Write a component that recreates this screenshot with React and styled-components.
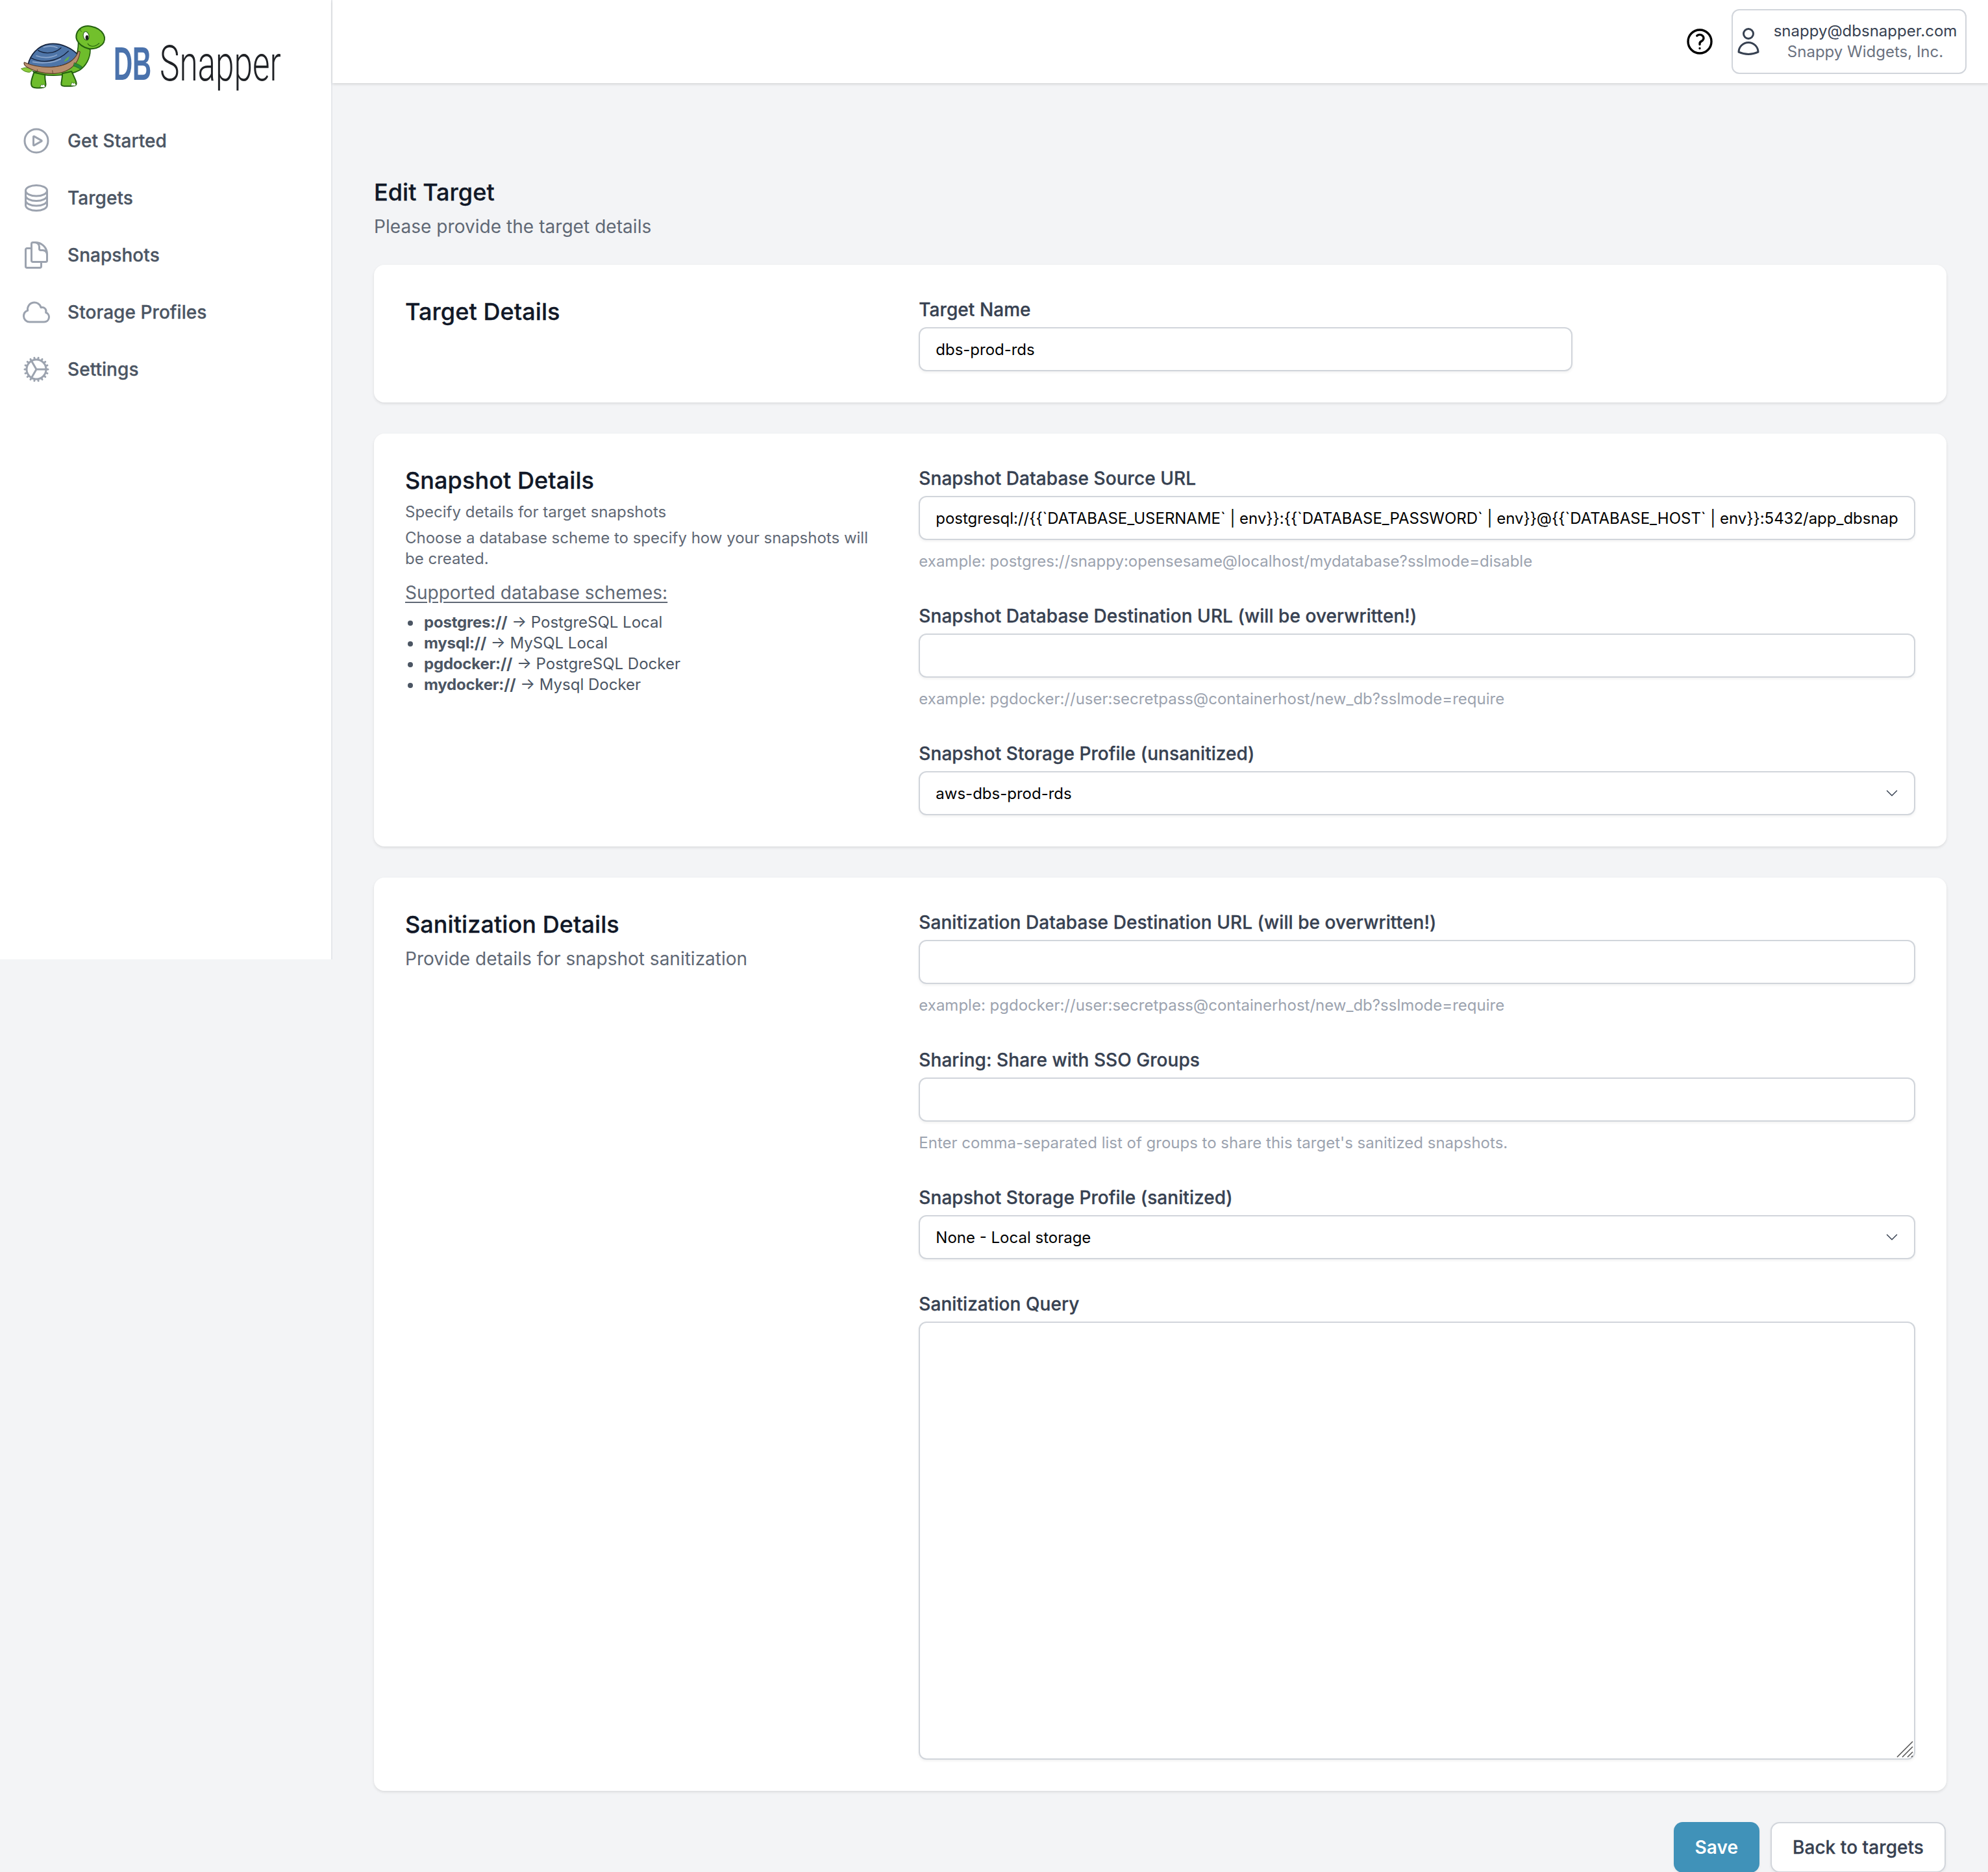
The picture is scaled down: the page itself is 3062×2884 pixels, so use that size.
import React from "react";
import styled, { createGlobalStyle } from "styled-components";

const Global = createGlobalStyle`
  html, body { margin: 0; padding: 0; background: #f3f4f6; }
  body { font-family: Inter, "Liberation Sans", sans-serif; color: #111827; }
  * { box-sizing: border-box; }
`;

const Page = styled.div`
  display: flex;
  align-items: flex-start;
  width: 3062px;
  height: 2884px;
  overflow: hidden;
  background: #f3f4f6;
`;
const Sidebar = styled.aside`
  flex: 0 0 512px;
  height: 1478px;
  background: #fff;
  border-right: 2px solid #e5e7eb;
`;
const LogoSvg = styled.svg`
  display: block;
  width: 450px;
  height: 140px;
  margin-bottom: 33px;
  overflow: visible;
`;
const Nav = styled.nav`
  display: flex;
  flex-direction: column;
  padding-left: 32px;
`;
const NavItem = styled.a`
  display: flex;
  align-items: center;
  gap: 24px;
  height: 88px;
  font-size: 28px;
  font-weight: 500;
  letter-spacing: 0.05px;
  -webkit-text-stroke: 0.3px #4b5563;
  color: #4b5563;
  svg { width: 48px; height: 48px; flex: none; color: #9ca3af; }
`;
const Column = styled.div`
  flex: 1;
  min-width: 0;
`;
const Header = styled.header`
  height: 128px;
  background: #fff;
  box-shadow: 0 2px 4px rgba(0, 0, 0, 0.12);
  display: flex;
  align-items: center;
  justify-content: flex-end;
  padding-right: 33px;
  gap: 25px;
`;
const HelpIcon = styled.svg`
  width: 48px;
  height: 48px;
  color: #000;
  margin-top: -1px;
`;
const UserBox = styled.div`
  width: 362px;
  height: 100px;
  border: 2px solid #d1d5db;
  border-radius: 12px;
  display: flex;
  align-items: center;
  margin-top: -1px;
  svg { width: 48px; height: 48px; color: #374151; flex: none; }
`;
const UserText = styled.div`
  flex: 1;
  text-align: center;
  font-size: 24px;
  line-height: 32px;
  padding: 1px 0 0 2px;
`;
const UserMail = styled.div`
  color: #374151;
`;
const UserOrg = styled.div`
  color: #6b7280;
`;
const Main = styled.main`
  padding: 140px 64px 0;
`;
const PageTitle = styled.h1`
  margin: 0;
  font-size: 36px;
  line-height: 56px;
  font-weight: 500;
  letter-spacing: 0.05px;
  -webkit-text-stroke: 0.3px #111827;
  color: #111827;
`;
const PageSub = styled.p`
  margin: 0 0 40px;
  padding-top: 5px;
  height: 44px;
  font-size: 28px;
  line-height: 40px;
  color: #5f6875;
  letter-spacing: 0.05px;
`;
const Card = styled.section`
  display: grid;
  grid-template-columns: repeat(3, minmax(0, 1fr));
  gap: 48px;
  padding: 48px;
  background: #fff;
  border-radius: 16px;
  box-shadow: 0 2px 4px rgba(0, 0, 0, 0.1);
  margin-bottom: 48px;
`;
const CardTitle = styled.h2`
  margin: 0;
  font-size: 36px;
  line-height: 48px;
  font-weight: 500;
  letter-spacing: 0.08px;
  -webkit-text-stroke: 0.3px #111827;
  color: #111827;
`;
const Small = styled.p`
  margin: 8px 0 0;
  padding-top: 1px;
  margin-bottom: -1px;
  font-size: 24px;
  line-height: 32px;
  color: #5f6875;
`;
const Lead = styled.p`
  margin: 9px 0 0;
  font-size: 28px;
  line-height: 40px;
  color: #5f6875;
`;
const Schemes = styled.p`
  margin: 17px 0 0;
  font-size: 28px;
  line-height: 40px;
  color: #5f6875;
  text-decoration: underline;
  text-underline-offset: 4px;
`;
const SchemeList = styled.ul`
  margin: 10px 0 0;
  padding: 0 0 0 29px;
  list-style: none;
  font-size: 24px;
  line-height: 32px;
  color: #4b5563;
  strong { font-weight: 650; letter-spacing: -0.2px; }
`;
const SchemeItem = styled.li`
  position: relative;
  &::before {
    content: "";
    position: absolute;
    left: -25px;
    top: 13px;
    width: 8px;
    height: 8px;
    border-radius: 50%;
    background: #4b5563;
  }
`;
const Fields = styled.div`
  grid-column: span 2;
  display: flex;
  flex-direction: column;
  gap: 48px;
`;
const Field = styled.div`
  display: flex;
  flex-direction: column;
  width: ${(p) => p.$width || "100%"};
`;
const Label = styled.label`
  font-size: 28px;
  line-height: 40px;
  padding-top: 1px;
  height: 40px;
  font-weight: 500;
  letter-spacing: 0.06px;
  -webkit-text-stroke: 0.3px #374151;
  color: #374151;
  margin-bottom: 8px;
`;
const Input = styled.input`
  width: 100%;
  height: 68px;
  padding: 0 24px;
  border: 2px solid #d1d5db;
  border-radius: 12px;
  background: #fff;
  box-shadow: 0 2px 4px rgba(0, 0, 0, 0.06);
  font-family: inherit;
  font-size: 24px;
  letter-spacing: -0.02px;
  color: #000;
  outline: none;
`;
const Help = styled.div`
  margin: 17px 0 -1px;
  font-size: 24px;
  line-height: 32px;
  color: #9ca3af;
`;
const SelectWrap = styled.div`
  position: relative;
  svg {
    position: absolute;
    right: 24px;
    top: 22px;
    width: 24px;
    height: 24px;
    color: #374151;
    pointer-events: none;
  }
`;
const Select = styled.select`
  appearance: none;
  width: 100%;
  height: 68px;
  padding: 0 24px;
  border: 2px solid #d1d5db;
  border-radius: 12px;
  background: #fff;
  box-shadow: 0 2px 4px rgba(0, 0, 0, 0.06);
  font-family: inherit;
  font-size: 24px;
  color: #000;
  outline: none;
`;
const AreaWrap = styled.div`
  position: relative;
  height: 675px;
  svg {
    position: absolute;
    right: 3px;
    bottom: 3px;
    width: 26px;
    height: 26px;
  }
`;
const Area = styled.textarea`
  display: block;
  width: 100%;
  height: 100%;
  padding: 20px 24px;
  resize: none;
  border: 2px solid #d1d5db;
  border-radius: 12px;
  background: #fff;
  box-shadow: 0 2px 4px rgba(0, 0, 0, 0.06);
  outline: none;
`;
const Actions = styled.div`
  display: flex;
  justify-content: flex-end;
  gap: 17px;
  padding-right: 1px;
`;
const Button = styled.button`
  height: 78px;
  padding: 0 ${(p) => (p.$primary ? 33 : 32)}px;
  border-radius: 14px;
  font-family: inherit;
  font-size: 28px;
  font-weight: ${(p) => (p.$primary ? 600 : 500)};
  letter-spacing: 0.05px;
  -webkit-text-stroke: ${(p) => (p.$primary ? "0" : "0.3px #374151")};
  border: ${(p) => (p.$primary ? "0" : "2px solid #d1d5db")};
  background: ${(p) => (p.$primary ? "#4092b9" : "#fff")};
  color: ${(p) => (p.$primary ? "#fff" : "#374151")};
  box-shadow: 0 2px 4px rgba(0, 0, 0, 0.06);
`;

const Ico = ({ d }) => (
  <svg viewBox="0 0 24 24" fill="none" stroke="currentColor" strokeWidth="1.5" strokeLinecap="round" strokeLinejoin="round">
    {d.map((p, i) => <path key={i} d={p} />)}
  </svg>
);

const icons = {
  play: ["M21 12a9 9 0 1 1-18 0 9 9 0 0 1 18 0Z", "M15.91 11.672a.375.375 0 0 1 0 .656l-5.603 3.113a.375.375 0 0 1-.557-.328V8.887c0-.286.307-.466.557-.327l5.603 3.112Z"],
  stack: ["M20.25 6.375c0 2.278-3.694 4.125-8.25 4.125S3.75 8.653 3.75 6.375m16.5 0c0-2.278-3.694-4.125-8.25-4.125S3.75 4.097 3.75 6.375m16.5 0v11.25c0 2.278-3.694 4.125-8.25 4.125s-8.25-1.847-8.25-4.125V6.375m16.5 0v3.75m-16.5-3.75v3.75m16.5 0v3.75C20.25 16.153 16.556 18 12 18s-8.25-1.847-8.25-4.125v-3.75m16.5 0c0 2.278-3.694 4.125-8.25 4.125s-8.25-1.847-8.25-4.125"],
  docs: ["M15.75 17.25v3.375c0 .621-.504 1.125-1.125 1.125h-9.75a1.125 1.125 0 0 1-1.125-1.125V7.875c0-.621.504-1.125 1.125-1.125H6.75a9.06 9.06 0 0 1 1.5.124m7.5 10.376h3.375c.621 0 1.125-.504 1.125-1.125V11.25c0-4.46-3.243-8.161-7.5-8.876a9.06 9.06 0 0 0-1.5-.124H9.375c-.621 0-1.125.504-1.125 1.125v3.5m7.5 10.375H9.375a1.125 1.125 0 0 1-1.125-1.125v-9.25m12 6.625v-1.875a3.375 3.375 0 0 0-3.375-3.375h-1.5a1.125 1.125 0 0 1-1.125-1.125v-1.5a3.375 3.375 0 0 0-3.375-3.375H9.75"],
  cloud: ["M2.25 15a4.5 4.5 0 0 0 4.5 4.5H18a3.75 3.75 0 0 0 1.332-7.257 3 3 0 0 0-3.758-3.848 5.25 5.25 0 0 0-10.233 2.33A4.502 4.502 0 0 0 2.25 15Z"],
  cog: ["M4.5 12a7.5 7.5 0 0 0 15 0m-15 0a7.5 7.5 0 1 1 15 0m-15 0H3m16.5 0H21m-1.5 0H12m-8.457 3.077 1.41-.513m14.095-5.13 1.41-.513M5.106 17.785l1.15-.964m11.49-9.642 1.149-.964M7.501 19.795l.75-1.3m7.5-12.99.75-1.3m-6.063 16.658.26-1.477m2.605-14.772.26-1.477m0 17.726-.26-1.477M10.698 4.614l-.26-1.477M16.5 19.794l-.75-1.299M7.5 4.205 12 12m6.894 5.785-1.149-.964M6.256 7.178l-1.15-.964m15.352 8.864-1.41-.513M4.954 9.435l-1.41-.514M12.002 12l-3.75 6.495"],
  user: ["M15.75 6a3.75 3.75 0 1 1-7.5 0 3.75 3.75 0 0 1 7.5 0ZM4.501 20.118a7.5 7.5 0 0 1 14.998 0A17.933 17.933 0 0 1 12 21.75c-2.676 0-5.216-.584-7.499-1.632Z"],
  chevron: ["m19.5 8.25-7.5 7.5-7.5-7.5"],
};

const OUT = "#24600f";
const Logo = () => (
  <LogoSvg viewBox="0 0 450 140">
    <g transform="translate(24 30) scale(.3333)" strokeLinejoin="round" strokeLinecap="round">
      <path d="M27 228c14-8 34-8 56 4l-18 12c-16 0-30-6-38-16Z" fill="#8ccb3a" stroke="#4d8a1f" strokeWidth="3" />
      <path d="M80 240c60 30 170 20 215-5 30-20 50-55 50-95l-55-35c0 30-5 55-15 75-50 50-140 65-195 60Z" fill="#6ebd2c" stroke={OUT} strokeWidth="5" />
      <path d="M85 245c-6 18-14 36-13 52 1 12 5 17 14 18 16 2 34 2 44-1 8-3 11-10 9-20-2-12-4-26-3-38Z" fill="#6ebd2c" stroke={OUT} strokeWidth="6" />
      <path d="M216 250c1 18-4 34-5 46-1 9 4 12 14 12 18 1 38 1 50-3 7-3 7-10 4-19-5-14-13-30-20-46Z" fill="#6ebd2c" stroke={OUT} strokeWidth="6" />
      <path d="M113 313l7-14 5 5 5-5 8 11-6 4ZM255 305l6-15 6 6 5-4 7 10-3 4Z" fill="#fff" stroke={OUT} strokeWidth="2" />
      <path d="M58 208c8-40 42-88 100-95 54-6 104 22 130 50-10 22-42 44-90 54-48 10-96 6-128-2-6-1-10-3-12-7Z" fill="#4e75a8" stroke="#14213a" strokeWidth="5" />
      <path d="M104 143c30 18 76 16 106-12" fill="none" stroke="#14213a" strokeWidth="4" />
      <path d="M72 178c50 26 120 20 172-32" fill="none" stroke="#14213a" strokeWidth="4" />
      <path d="M130 128c20-6 44-6 62 2M96 168c30 10 66 10 94-4M80 196c40 8 90 6 128-14" fill="none" stroke="#9db4d4" strokeWidth="5" opacity=".8" />
      <path d="M224 195c4-10 14-20 26-25l-6 14c-6 6-12 10-20 11Z" fill="#5fb04b" />
      <path d="M40 198c-3 8 2 15 12 22 30 18 80 32 128 30 50-3 88-26 106-60 6-12 10-26 12-40l-8-4c-4 14-14 30-28 42-20 18-58 30-98 32-46 2-86-6-124-22Z" fill="#b98f6e" stroke="#5b3d28" strokeWidth="3.5" />
      <path d="M100 232l3 11M170 236l2 12" stroke="#5b3d28" strokeWidth="2.5" fill="none" />
      <path d="M272 200c12 4 24 10 35 18l-6 12c-12-6-22-12-33-15Z" fill="#2c8a3c" stroke={OUT} strokeWidth="2" />
      <path d="M298 42c14-10 34-14 52-10 24 5 46 18 56 36 8 15 7 34-6 48-14 14-38 24-64 18-22-5-42-18-52-38-8-16-4-38 14-54Z" fill="#72c02c" stroke={OUT} strokeWidth="6" />
      <path d="M300 40c-2 8 0 12 4 16" fill="none" stroke={OUT} strokeWidth="3" />
      <ellipse cx="326" cy="76" rx="13" ry="20" fill="#fff" stroke={OUT} strokeWidth="3" transform="rotate(-12 326 76)" />
      <ellipse cx="330" cy="84" rx="7" ry="11" fill="#1a1f1a" />
      <path d="M334 112c6 12 30 20 52-2" fill="none" stroke={OUT} strokeWidth="3.5" />
    </g>
    <text transform="translate(175 123) scale(.56 1)" fontFamily="'Liberation Sans', sans-serif" fontWeight="700" fontSize="72" fill="#4a72ac">DB</text>
    <text transform="translate(246 124) scale(.675 1)" fontFamily="Roboto, 'Liberation Sans', sans-serif" fontWeight="300" fontSize="76" fill="#1f2125">Snapper</text>
  </LogoSvg>
);

const nav = [
  ["play", "Get Started"],
  ["stack", "Targets"],
  ["docs", "Snapshots"],
  ["cloud", "Storage Profiles"],
  ["cog", "Settings"],
];

const TextField = ({ label, value = "", help, width }) => (
  <Field $width={width}>
    <Label>{label}</Label>
    <Input readOnly value={value} />
    {help && <Help>{help}</Help>}
  </Field>
);

const SelectField = ({ label, value }) => (
  <Field>
    <Label>{label}</Label>
    <SelectWrap>
      <Select defaultValue={value}><option>{value}</option></Select>
      <Ico d={icons.chevron} />
    </SelectWrap>
  </Field>
);

export default function App() {
  return (
    <Page>
      <Global />
      <Sidebar>
        <Logo />
        <Nav>
          {nav.map(([ic, t]) => (
            <NavItem key={t}><Ico d={icons[ic]} />{t}</NavItem>
          ))}
        </Nav>
      </Sidebar>
      <Column>
        <Header>
          <HelpIcon viewBox="0 0 24 24" fill="none" stroke="currentColor" strokeWidth="1.7" strokeLinecap="round" strokeLinejoin="round">
            <path d="M9.879 7.519c1.171-1.025 3.071-1.025 4.242 0 1.172 1.025 1.172 2.687 0 3.712-.203.179-.43.326-.67.442-.745.361-1.45.999-1.45 1.827v.75M21 12a9 9 0 1 1-18 0 9 9 0 0 1 18 0Zm-9 5.25h.008v.008H12v-.008Z" />
          </HelpIcon>
          <UserBox>
            <Ico d={icons.user} />
            <UserText>
              <UserMail>snappy@dbsnapper.com</UserMail>
              <UserOrg>Snappy Widgets, Inc.</UserOrg>
            </UserText>
          </UserBox>
        </Header>
        <Main>
          <PageTitle>Edit Target</PageTitle>
          <PageSub>Please provide the target details</PageSub>

          <Card>
            <div><CardTitle>Target Details</CardTitle></div>
            <Fields>
              <TextField label="Target Name" value="dbs-prod-rds" width="1007px" />
            </Fields>
          </Card>

          <Card>
            <div>
              <CardTitle>Snapshot Details</CardTitle>
              <Small>Specify details for target snapshots</Small>
              <Small>Choose a database scheme to specify how your snapshots will be created.</Small>
              <Schemes>Supported database schemes:</Schemes>
              <SchemeList>
                <SchemeItem><strong>postgres://</strong> → PostgreSQL Local</SchemeItem>
                <SchemeItem><strong>mysql://</strong> → MySQL Local</SchemeItem>
                <SchemeItem><strong>pgdocker://</strong> → PostgreSQL Docker</SchemeItem>
                <SchemeItem><strong>mydocker://</strong> → Mysql Docker</SchemeItem>
              </SchemeList>
            </div>
            <Fields>
              <TextField
                label="Snapshot Database Source URL"
                value="postgresql://{{`DATABASE_USERNAME` | env}}:{{`DATABASE_PASSWORD` | env}}@{{`DATABASE_HOST` | env}}:5432/app_dbsnapper?sslmode=require"
                help="example: postgres://snappy:opensesame@localhost/mydatabase?sslmode=disable"
              />
              <TextField
                label="Snapshot Database Destination URL (will be overwritten!)"
                help="example: pgdocker://user:secretpass@containerhost/new_db?sslmode=require"
              />
              <SelectField label="Snapshot Storage Profile (unsanitized)" value="aws-dbs-prod-rds" />
            </Fields>
          </Card>

          <Card>
            <div>
              <CardTitle>Sanitization Details</CardTitle>
              <Lead>Provide details for snapshot sanitization</Lead>
            </div>
            <Fields>
              <TextField
                label="Sanitization Database Destination URL (will be overwritten!)"
                help="example: pgdocker://user:secretpass@containerhost/new_db?sslmode=require"
              />
              <TextField
                label="Sharing: Share with SSO Groups"
                help="Enter comma-separated list of groups to share this target's sanitized snapshots."
              />
              <SelectField label="Snapshot Storage Profile (sanitized)" value="None - Local storage" />
              <Field>
                <Label>Sanitization Query</Label>
                <AreaWrap>
                  <Area readOnly />
                  <svg viewBox="0 0 26 26" fill="none" stroke="#555" strokeWidth="1.6">
                    <path d="M1 25 25 1M9 25 25 9M17 25 25 17M23 25l2-2" />
                  </svg>
                </AreaWrap>
              </Field>
            </Fields>
          </Card>

          <Actions>
            <Button $primary>Save</Button>
            <Button>Back to targets</Button>
          </Actions>
        </Main>
      </Column>
    </Page>
  );
}
